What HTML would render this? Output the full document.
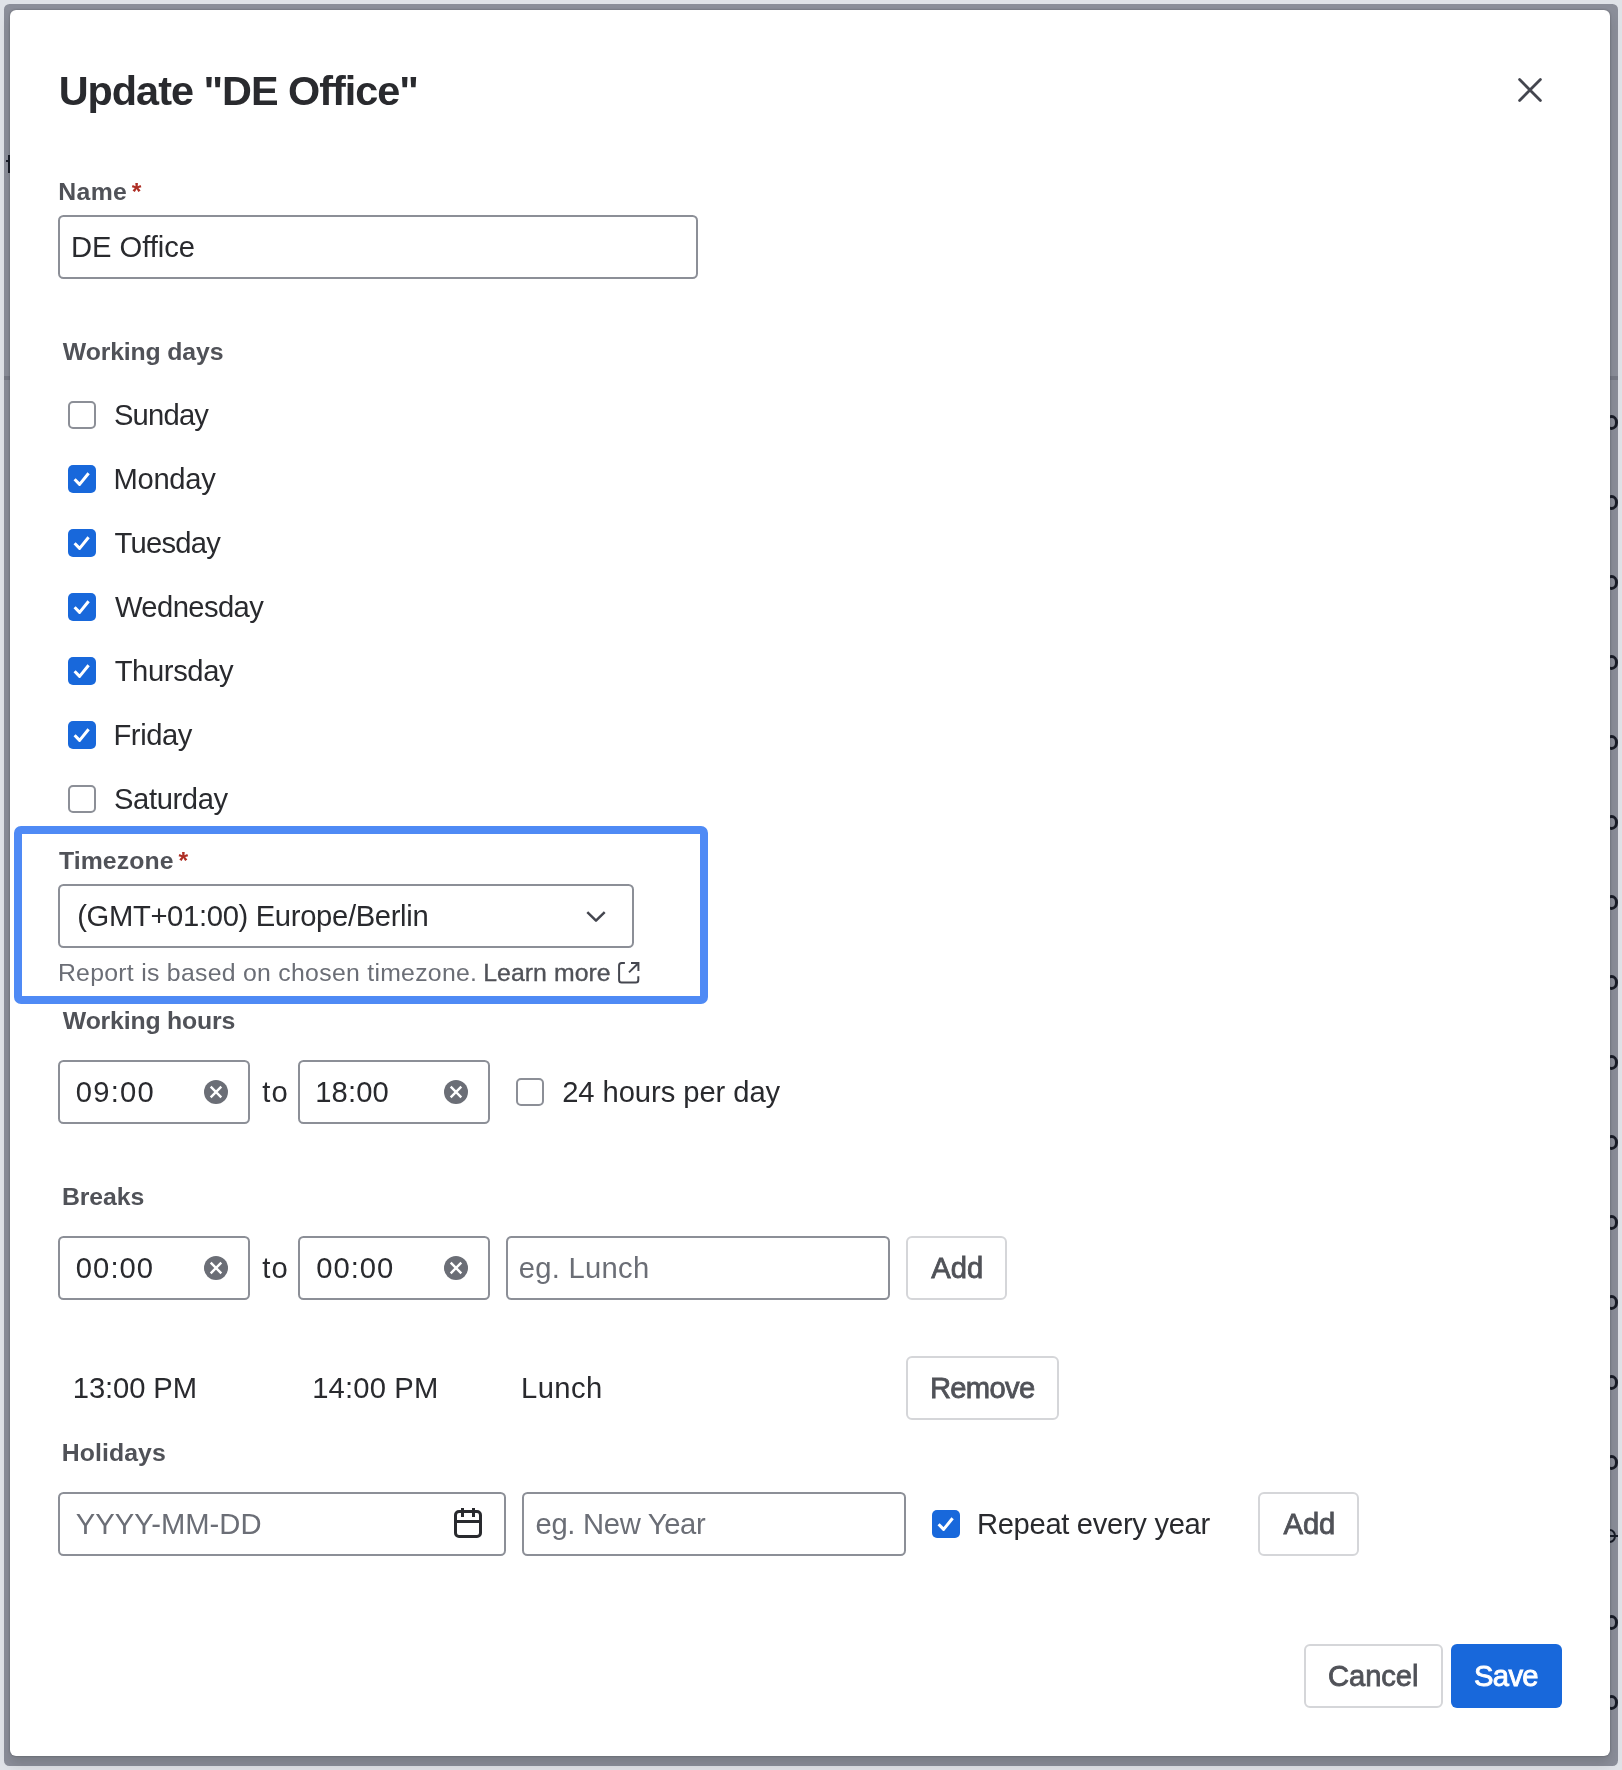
<!DOCTYPE html>
<html lang="en">
<head>
<meta charset="utf-8">
<title>Update "DE Office"</title>
<style>
html,body{margin:0;padding:0}
body{width:1622px;height:1770px;position:relative;overflow:hidden;background:#dfe2e7;font-family:"Liberation Sans",sans-serif;}
.abs,.t,.in,.btn,.cb{position:absolute;box-sizing:border-box}
.blanket{left:4px;top:4px;width:1614px;height:1762px;background:#8b8e99;border-radius:5.5px;overflow:hidden}
.modal{left:10px;top:10px;width:1600px;height:1746px;background:#fff;border-radius:6px;box-shadow:0 0 2px rgba(30,31,33,.45),0 8px 12px rgba(30,31,33,.15)}
.t{white-space:nowrap;line-height:0;height:0}
.txt{left:0;top:0;width:1622px;height:1770px;will-change:transform}
.in{border:2px solid #8c8f97;border-radius:5.5px;background:#fff}
.btn{border:2px solid #d5d6d9;border-radius:6px;background:#fff}
.cb{width:28px;height:28px;border:2px solid #8c8f97;border-radius:5px;background:#fff}
.cb.on{border:0;background:#1868db}
.hl{border:8px solid #4f8af5;border-radius:7px}
svg{position:absolute;overflow:visible}
</style>
</head>
<body>
<div class="abs blanket">
<div class="abs" style="left:0.0px;top:372.0px;width:1614px;height:4px;background:#777a86"></div>
<div class="abs" style="left:1600.6px;top:410.5px;width:13.6px;height:15.2px;border:3px solid #181c27;border-radius:50%;box-sizing:border-box"></div>
<div class="abs" style="left:1600.6px;top:490.5px;width:13.6px;height:15.2px;border:3px solid #181c27;border-radius:50%;box-sizing:border-box"></div>
<div class="abs" style="left:1600.6px;top:570.5px;width:13.6px;height:15.2px;border:3px solid #181c27;border-radius:50%;box-sizing:border-box"></div>
<div class="abs" style="left:1600.6px;top:650.5px;width:13.6px;height:15.2px;border:3px solid #181c27;border-radius:50%;box-sizing:border-box"></div>
<div class="abs" style="left:1600.6px;top:730.5px;width:13.6px;height:15.2px;border:3px solid #181c27;border-radius:50%;box-sizing:border-box"></div>
<div class="abs" style="left:1600.6px;top:810.5px;width:13.6px;height:15.2px;border:3px solid #181c27;border-radius:50%;box-sizing:border-box"></div>
<div class="abs" style="left:1600.6px;top:890.5px;width:13.6px;height:15.2px;border:3px solid #181c27;border-radius:50%;box-sizing:border-box"></div>
<div class="abs" style="left:1600.6px;top:970.5px;width:13.6px;height:15.2px;border:3px solid #181c27;border-radius:50%;box-sizing:border-box"></div>
<div class="abs" style="left:1600.6px;top:1050.5px;width:13.6px;height:15.2px;border:3px solid #181c27;border-radius:50%;box-sizing:border-box"></div>
<div class="abs" style="left:1600.6px;top:1130.5px;width:13.6px;height:15.2px;border:3px solid #181c27;border-radius:50%;box-sizing:border-box"></div>
<div class="abs" style="left:1600.6px;top:1210.5px;width:13.6px;height:15.2px;border:3px solid #181c27;border-radius:50%;box-sizing:border-box"></div>
<div class="abs" style="left:1600.6px;top:1290.5px;width:13.6px;height:15.2px;border:3px solid #181c27;border-radius:50%;box-sizing:border-box"></div>
<div class="abs" style="left:1600.6px;top:1370.5px;width:13.6px;height:15.2px;border:3px solid #181c27;border-radius:50%;box-sizing:border-box"></div>
<div class="abs" style="left:1600.6px;top:1450.5px;width:13.6px;height:15.2px;border:3px solid #181c27;border-radius:50%;box-sizing:border-box"></div>
<div class="abs" style="left:1600.6px;top:1610.5px;width:13.6px;height:15.2px;border:3px solid #181c27;border-radius:50%;box-sizing:border-box"></div>
<div class="abs" style="left:1600.6px;top:1690.5px;width:13.6px;height:15.2px;border:3px solid #181c27;border-radius:50%;box-sizing:border-box"></div>
<div class="abs" style="left:1599.0px;top:1524.6px;width:13.2px;height:14.7px;border:2.7px solid #181c27;border-radius:50%;box-sizing:border-box"></div>
<div class="abs" style="left:1602.0px;top:1531.0px;width:12px;height:2.4px;background:#181c27"></div>
<div class="abs" style="left:4.3px;top:151.0px;width:2.4px;height:17.5px;background:#181c27"></div>
<div class="abs" style="left:1.5px;top:155.5px;width:5px;height:2.4px;background:#181c27"></div>
</div>
<div class="abs modal"></div>
<svg width="32" height="32" viewBox="-16 -16 32 32" style="left:1514px;top:74px"><path d="M-10.4 -10.4L10.4 10.4M10.4 -10.4L-10.4 10.4" stroke="#44464f" stroke-width="2.8" stroke-linecap="round" fill="none"/></svg>
<div class="in" style="left:58px;top:215px;width:640px;height:64px"></div>
<div class="cb" style="left:68px;top:401px"></div>
<div class="cb on" style="left:68px;top:465px"><svg width="28" height="28" viewBox="0 0 28 28" style="left:0;top:0"><path d="M6.6 14.2 L11.6 19.4 L20.6 8.3" fill="none" stroke="#fff" stroke-width="3" stroke-linejoin="round"/></svg></div>
<div class="cb on" style="left:68px;top:529px"><svg width="28" height="28" viewBox="0 0 28 28" style="left:0;top:0"><path d="M6.6 14.2 L11.6 19.4 L20.6 8.3" fill="none" stroke="#fff" stroke-width="3" stroke-linejoin="round"/></svg></div>
<div class="cb on" style="left:68px;top:593px"><svg width="28" height="28" viewBox="0 0 28 28" style="left:0;top:0"><path d="M6.6 14.2 L11.6 19.4 L20.6 8.3" fill="none" stroke="#fff" stroke-width="3" stroke-linejoin="round"/></svg></div>
<div class="cb on" style="left:68px;top:657px"><svg width="28" height="28" viewBox="0 0 28 28" style="left:0;top:0"><path d="M6.6 14.2 L11.6 19.4 L20.6 8.3" fill="none" stroke="#fff" stroke-width="3" stroke-linejoin="round"/></svg></div>
<div class="cb on" style="left:68px;top:721px"><svg width="28" height="28" viewBox="0 0 28 28" style="left:0;top:0"><path d="M6.6 14.2 L11.6 19.4 L20.6 8.3" fill="none" stroke="#fff" stroke-width="3" stroke-linejoin="round"/></svg></div>
<div class="cb" style="left:68px;top:785px"></div>
<div class="abs hl" style="left:14px;top:826px;width:694px;height:178px"></div>
<div class="in" style="left:58px;top:884px;width:576px;height:64px"></div>
<svg width="32" height="32" viewBox="0 0 32 32" style="left:580px;top:900px"><path d="M7.3 12.2L16 20.6L24.7 12.2" stroke="#44464f" stroke-width="2.5" stroke-linejoin="round" fill="none"/></svg>
<svg width="24" height="24" viewBox="616 961 24 24" style="left:616px;top:961px"><path d="M624.9 963H621.6a2.5 2.5 0 0 0-2.5 2.5V980a2.5 2.5 0 0 0 2.5 2.5H635.8a2.5 2.5 0 0 0 2.5-2.5V976.2M631 963H638.4V971M638.2 963.2L629 972.4" stroke="#44464f" stroke-width="2" fill="none"/></svg>
<div class="in" style="left:58px;top:1060px;width:192px;height:64px"></div>
<div class="in" style="left:298px;top:1060px;width:192px;height:64px"></div>
<svg width="24" height="24" viewBox="-12 -12 24 24" style="left:204px;top:1080px"><circle r="12" fill="#6b6e76"/><path d="M-5.3 -5.3L5.3 5.3M5.3 -5.3L-5.3 5.3" stroke="#fff" stroke-width="2.4" fill="none"/></svg>
<svg width="24" height="24" viewBox="-12 -12 24 24" style="left:444px;top:1080px"><circle r="12" fill="#6b6e76"/><path d="M-5.3 -5.3L5.3 5.3M5.3 -5.3L-5.3 5.3" stroke="#fff" stroke-width="2.4" fill="none"/></svg>
<div class="cb" style="left:516px;top:1078px"></div>
<div class="in" style="left:58px;top:1236px;width:192px;height:64px"></div>
<div class="in" style="left:298px;top:1236px;width:192px;height:64px"></div>
<div class="in" style="left:506px;top:1236px;width:384px;height:64px"></div>
<svg width="24" height="24" viewBox="-12 -12 24 24" style="left:204px;top:1256px"><circle r="12" fill="#6b6e76"/><path d="M-5.3 -5.3L5.3 5.3M5.3 -5.3L-5.3 5.3" stroke="#fff" stroke-width="2.4" fill="none"/></svg>
<svg width="24" height="24" viewBox="-12 -12 24 24" style="left:444px;top:1256px"><circle r="12" fill="#6b6e76"/><path d="M-5.3 -5.3L5.3 5.3M5.3 -5.3L-5.3 5.3" stroke="#fff" stroke-width="2.4" fill="none"/></svg>
<div class="btn" style="left:906px;top:1236px;width:101px;height:64px;"></div>
<div class="btn" style="left:906px;top:1356px;width:153px;height:64px;"></div>
<div class="in" style="left:58px;top:1492px;width:448px;height:64px"></div>
<div class="in" style="left:522px;top:1492px;width:384px;height:64px"></div>
<svg width="32" height="32" viewBox="452 1506 32 32" style="left:452px;top:1506px"><rect x="455.5" y="1511.5" width="25" height="25" rx="3.5" stroke="#292a2e" stroke-width="3" fill="none"/><path d="M462.5 1508V1517M473.5 1508V1517M455.5 1521.5H480.5" stroke="#292a2e" stroke-width="3" fill="none"/></svg>
<div class="cb on" style="left:932px;top:1510px"><svg width="28" height="28" viewBox="0 0 28 28" style="left:0;top:0"><path d="M6.6 14.2 L11.6 19.4 L20.6 8.3" fill="none" stroke="#fff" stroke-width="3" stroke-linejoin="round"/></svg></div>
<div class="btn" style="left:1258px;top:1492px;width:101px;height:64px;"></div>
<div class="btn" style="left:1304px;top:1644px;width:139px;height:64px;"></div>
<div class="btn" style="left:1451px;top:1644px;width:111px;height:64px;border:0;background:#1868db;"></div>
<div class="abs txt">
<div class="t" style="left:58.71px;top:91.00px;font-size:41.4px;letter-spacing:-1.012px;color:#292a2e;font-weight:700;">Update "DE Office"</div>
<div class="t" style="left:58.30px;top:192.00px;font-size:24.8px;letter-spacing:0.324px;color:#505258;font-weight:700;">Name</div>
<div class="t" style="left:131.75px;top:192.00px;font-size:24.8px;letter-spacing:0.000px;color:#ae2e24;font-weight:700;">*</div>
<div class="t" style="left:71.07px;top:247.00px;font-size:29.2px;letter-spacing:-0.062px;color:#292a2e;">DE Office</div>
<div class="t" style="left:62.85px;top:352.00px;font-size:24.8px;letter-spacing:-0.137px;color:#505258;font-weight:700;">Working days</div>
<div class="t" style="left:113.94px;top:415.00px;font-size:29.2px;letter-spacing:-0.804px;color:#292a2e;">Sunday</div>
<div class="t" style="left:113.47px;top:479.00px;font-size:29.2px;letter-spacing:-0.310px;color:#292a2e;">Monday</div>
<div class="t" style="left:114.44px;top:543.00px;font-size:29.2px;letter-spacing:-0.734px;color:#292a2e;">Tuesday</div>
<div class="t" style="left:114.90px;top:607.00px;font-size:29.2px;letter-spacing:-0.578px;color:#292a2e;">Wednesday</div>
<div class="t" style="left:114.64px;top:671.00px;font-size:29.2px;letter-spacing:-0.373px;color:#292a2e;">Thursday</div>
<div class="t" style="left:113.47px;top:735.00px;font-size:29.2px;letter-spacing:-0.429px;color:#292a2e;">Friday</div>
<div class="t" style="left:113.94px;top:799.00px;font-size:29.2px;letter-spacing:-0.366px;color:#292a2e;">Saturday</div>
<div class="t" style="left:58.90px;top:861.00px;font-size:24.8px;letter-spacing:0.099px;color:#505258;font-weight:700;">Timezone</div>
<div class="t" style="left:178.55px;top:861.00px;font-size:24.8px;letter-spacing:0.000px;color:#ae2e24;font-weight:700;">*</div>
<div class="t" style="left:77.13px;top:916.00px;font-size:29.2px;letter-spacing:-0.324px;color:#292a2e;">(GMT+01:00) Europe/Berlin</div>
<div class="t" style="left:57.91px;top:973.00px;font-size:24.8px;letter-spacing:0.285px;color:#6b6e76;">Report is based on chosen timezone.</div>
<div class="t" style="left:483.16px;top:973.00px;font-size:24.8px;letter-spacing:0.075px;color:#505258;-webkit-text-stroke:0.35px #505258;">Learn more</div>
<div class="t" style="left:62.85px;top:1021.00px;font-size:24.8px;letter-spacing:-0.172px;color:#505258;font-weight:700;">Working hours</div>
<div class="t" style="left:75.84px;top:1092.00px;font-size:29.2px;letter-spacing:1.205px;color:#292a2e;">09:00</div>
<div class="t" style="left:262.15px;top:1092.00px;font-size:29.2px;letter-spacing:1.331px;color:#292a2e;">to</div>
<div class="t" style="left:315.27px;top:1092.00px;font-size:29.2px;letter-spacing:0.108px;color:#292a2e;">18:00</div>
<div class="t" style="left:562.18px;top:1092.00px;font-size:29.2px;letter-spacing:-0.072px;color:#292a2e;">24 hours per day</div>
<div class="t" style="left:62.00px;top:1197.00px;font-size:24.8px;letter-spacing:-0.105px;color:#505258;font-weight:700;">Breaks</div>
<div class="t" style="left:75.84px;top:1268.00px;font-size:29.2px;letter-spacing:1.042px;color:#292a2e;">00:00</div>
<div class="t" style="left:262.15px;top:1268.00px;font-size:29.2px;letter-spacing:1.331px;color:#292a2e;">to</div>
<div class="t" style="left:316.19px;top:1268.00px;font-size:29.2px;letter-spacing:0.992px;color:#292a2e;">00:00</div>
<div class="t" style="left:518.84px;top:1268.00px;font-size:29.2px;letter-spacing:0.261px;color:#6b6e76;">eg. Lunch</div>
<div class="t" style="left:931.20px;top:1268.00px;font-size:29.2px;letter-spacing:0.017px;color:#505258;-webkit-text-stroke:0.8px #505258;">Add</div>
<div class="t" style="left:72.82px;top:1388.00px;font-size:29.2px;letter-spacing:-0.099px;color:#292a2e;">13:00 PM</div>
<div class="t" style="left:312.18px;top:1388.00px;font-size:29.2px;letter-spacing:0.166px;color:#292a2e;">14:00 PM</div>
<div class="t" style="left:520.97px;top:1388.00px;font-size:29.2px;letter-spacing:0.466px;color:#292a2e;">Lunch</div>
<div class="t" style="left:929.92px;top:1388.00px;font-size:29.2px;letter-spacing:-0.673px;color:#505258;-webkit-text-stroke:0.8px #505258;">Remove</div>
<div class="t" style="left:61.65px;top:1453.00px;font-size:24.8px;letter-spacing:0.113px;color:#505258;font-weight:700;">Holidays</div>
<div class="t" style="left:75.84px;top:1524.00px;font-size:29.2px;letter-spacing:0.036px;color:#6b6e76;">YYYY-MM-DD</div>
<div class="t" style="left:535.54px;top:1524.00px;font-size:29.2px;letter-spacing:-0.311px;color:#6b6e76;">eg. New Year</div>
<div class="t" style="left:976.92px;top:1524.00px;font-size:29.2px;letter-spacing:-0.323px;color:#292a2e;">Repeat every year</div>
<div class="t" style="left:1283.55px;top:1524.00px;font-size:29.2px;letter-spacing:-0.083px;color:#505258;-webkit-text-stroke:0.8px #505258;">Add</div>
<div class="t" style="left:1328.03px;top:1676.00px;font-size:29.2px;letter-spacing:-0.080px;color:#505258;-webkit-text-stroke:0.8px #505258;">Cancel</div>
<div class="t" style="left:1474.09px;top:1676.00px;font-size:29.2px;letter-spacing:-0.687px;color:#ffffff;-webkit-text-stroke:0.9px #ffffff;">Save</div>
</div>
</body>
</html>
